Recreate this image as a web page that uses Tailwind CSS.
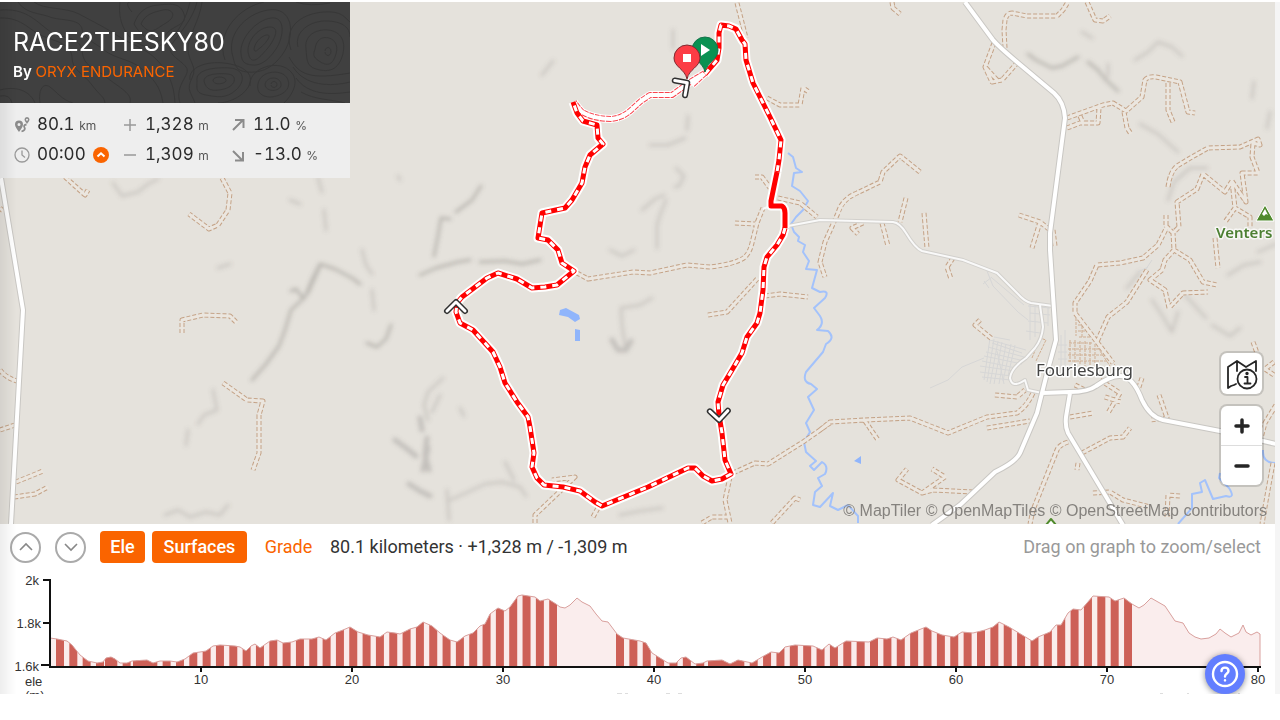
<!DOCTYPE html>
<html lang="en">
  <head>
    <meta charset="UTF-8" />
    <meta name="viewport" content="width=device-width, initial-scale=1.0" />
    <title>RACE2THESKY80</title>
    <script src="https://cdn.jsdelivr.net/npm/@tailwindcss/browser@4"></script>
  </head>

  <body class="bg-white pt-0.5 font-['Inter',sans-serif] text-[#333]">
    <main class="relative h-[692px] overflow-hidden border-r-5 border-[#f5f5f5]">
      <!-- Map -->
      <section class="relative h-[522px] overflow-hidden bg-[#e5e2dc]" aria-label="Route map">
        <svg class="absolute inset-0 h-full w-full" viewBox="0 2 1275 522" preserveAspectRatio="xMidYMid slice" fill="none" stroke-linejoin="round">
          <defs>
            <filter id="soft" x="-10%" y="-10%" width="120%" height="120%"><feGaussianBlur stdDeviation="2.2" /></filter>
            <path id="tracks" d="M892 2L893 8 900 14M1005 48L1004 30 1005 20Q1007 13 1012 13L1027 16H1057L1063 10 1068 2M1087 2L1095 20 1103 21 1110 16
              M994 43L985 67 992 82 1002 80 1017 63M986 68L997 80M1067 118L1103 105 1113 103 1126 111 1142 97 1145 80Q1148 76 1156 77L1180 82 1188 112 1195 113M1168 83V110L1173 122
              M1067 128L1080 123H1098L1099 108M1080 116L1083 123M1124 112L1127 128 1131 134M1168 187Q1170 172 1177 166L1192 157 1208 148 1240 147 1258 139 1260 145 1253 143 1252 157 1258 173 1242 173 1246 202 1232 181 1235 208 1250 217V227M1235 208L1225 222
              M1232 181L1225 192 1203 174 1197 189 1177 202 1179 227 1173 233 1174 250 1165 260 1162 270 1150 280 1165 290 1169 308 1183 293 1208 292M1174 250L1190 260 1203 282 1217 285M1173 233L1167 227 1158 245 1143 258 1120 263 1097 265 1090 281 1075 303V313L1097 342 1113 363M1166 215V227
              M1215 238L1217 258 1218 268M920 172L900 156 883 172 880 182 857 193Q842 199 838 213L825 242 820 262 825 277M906 198L900 222M924 213L927 248M882 223L888 246M863 223L852 228 858 234M1019 215L1040 222 1050 230M1040 222L1032 248M1053 230L1055 246
              M1147 270L1127 302 1108 317 1097 342M820 430L830 422 865 420 910 418 948 433 987 417 1017 413Q1027 406 1033 393M865 421L878 440M987 428L1030 421M995 395L1017 397 1025 390M973 492L933 490 922 493 898 480 907 469M922 493L945 477 932 469
              M1068 442Q1059 445 1057 450L1033 510 1030 524M1070 417L1093 413M1082 453L1110 438 1123 437 1130 428M1093 493L1110 492 1123 500 1150 507M1167 517L1168 495 1180 496M1078 463L1077 470M1100 380L1120 393 1108 413M1105 397L1121 402M1142 378L1138 390M1159 395L1167 418 1150 420
              M1253 342L1257 353M1276 405L1265 423 1260 442M1273 463L1268 490 1262 524M1274 362L1265 369 1274 375M980 320L975 325 992 339M953 258L947 267 951 279M1075 385L1085 390
              M65 177L85 195 88 190M222 178L230 193 228 210 218 225 209 229 189 214M182 333V320L203 315 230 316 237 323M223 383L247 400 263 401 259 415V453L253 470M0 370Q6 378 17 381M0 430L15 425M16 482L43 471M14 497L35 494 48 487
              M577 273L588 279 633 272 650 273 687 265 710 267Q736 264 745 257 750 252 752 243L757 223 763 208M735 223L755 224M708 315L727 312 758 278M765 296L780 294 808 297M778 198L800 203 817 217M755 177L762 177 770 188M767 98L780 105 800 105 803 88 809 92M737 3L746 38
              M733 473L755 463 768 464 803 442 830 423M535 523V515L575 477 552 480M730 477L725 500 730 523M702 523L712 517 728 517M772 523L795 498 800 500M593 517L598 508M0 208L4 212" />
            <path id="hollow" d="M705 73L690 82 683 87 672 95 650 95 641 101 630 111Q622 118 611 119 594 119 582 112 578 108 574 102M705 73L692 85" />
            <path id="striped" d="M705 74L717 60 719 48 719 33 721 25 729 26 736 29 742 40 745 44 746 60 753 83 770 117 781 140 779 160 777 172M785 228L783 235 777 245 767 257 764 267 763 290 760 313 757 323 747 337 742 353 732 370 723 385 718 402 719 415 722 433 725 460 731 474 722 479 712 481 703 476 695 468 688 468 648 487 602 506 595 502 580 491 563 487 544 485 537 478 532 467 534 453 530 427 528 417 517 402 505 383 500 367 493 352 473 330 460 323 456 312 457 303 462 297 487 278 498 273 517 279 532 288 545 287 557 285 574 271 562 263 558 250 548 240 538 238 542 213 565 208 572 200 582 183 585 167 590 155 603 144 598 138 597 125 583 121 577 113 573 102" />
            <path id="paved" d="M777 172L771 201V206H782Q785 208 785 213V228" />
            <path id="chevron" d="M-9 5L0 -4 9 5" />
            <path id="highways" d="M965 2L993 40Q998 46 1017 62L1054 93Q1064 102 1065 118L1050 233V250L1056 340 1047 373 1037 413 1020 453Q1016 462 995 472L960 505 932 525M1042 393L1070 392Q1088 392 1096 386 1120 369 1131 381 1137 387 1142 400 1150 417 1163 420L1220 431 1276 444M1070 393L1066 417Q1065 427 1068 433L1123 525M1 178L23 310 11 524" />
          </defs>

          <!-- Hill shading -->
          <g filter="url(#soft)" stroke="#77746f" stroke-linecap="round" stroke-linejoin="round">
            <path stroke-width="3" opacity=".38" d="M252 380L266 364 279 346 285 330 291 310 305 297 312 280 320 264 335 269 352 278 360 284M320 266L308 293M303 298L296 289 291 291M420 275L436 268 458 262 470 260M480 262L505 261 522 264 540 260M367 343L377 347 386 339 391 325 M434 256L438 236 441 218 450 219M456 212L472 200 481 186M1028 54L1036 60 1052 68 1062 66 1078 57M1088 62L1098 70 1106 80 1118 91" />
            <path stroke-width="5" opacity=".3" d="M427 438L425 455 429 470M395 440L406 448 416 456M428 448L423 470M409 484L420 491 430 496M612 340L618 350 626 350 631 341M420 418L422 430" />
            <path stroke-width="3" opacity=".22" d="M443 378L428 392 424 405 428 420M440 395L432 412M460 408L464 416M450 500L468 492 485 484 502 482 520 487 526 496M447 490L448 505 449 520M505 462L514 480M620 515L640 511 662 508M676 168L684 176 679 186 675 187M642 210L655 199 664 195 M657 248L657 225 660 215 666 200M673 30V48M650 145L668 145 685 138M688 116L687 130M542 75L553 61M165 515L178 510 190 517 206 512 220 515 228 505M113 183L122 196 138 192 148 184 158 179M218 268L230 264M186 445L188 430M198 424L204 415 217 410 213 390M1135 60L1148 52 1158 42 1172 47 1182 56M1108 64L1108 76M1082 32L1092 38M1140 124L1158 134 1178 152M1168 200L1174 182 1190 168 1207 168M1270 112L1267 128M1127 288L1140 272M1152 300L1162 315 1172 332 1178 312M1185 295L1206 318M1212 325L1230 336 1240 328M1228 275L1244 265 1260 262M1258 252L1276 244M1252 98L1254 82M398 176L400 180M290 200L300 204M625 345L622 325 621 308 640 305 652 298M318 178L322 192M324 210L326 230M362 250L366 265 372 274M372 290L374 310M610 250L622 256 634 250" />
          </g>

          <!-- Water -->
          <g stroke="#a3c2fb" stroke-width="2">
            <path d="M788 153L793 157 796 168 802 172 794 173 792 186 800 191 808 201 803 210 796 217 791 224 794 232 799 237 798 241 805 245 803 252 809 261 806 269 817 270 812 288 820 292Q830 290 825 298L814 308 820 316Q825 324 817 330L828 331Q836 338 826 344L823 352 806 372Q802 382 811 384L817 389 808 397 814 410 806 423 810 432 804 442 806 452 816 461 810 466 814 470 822 462Q829 466 825 474L818 478 822 486 815 492 813 505 820 507 833 493 830 506 838 510 848 505 858 516 858 523" />
            <path d="M1263 450Q1262 463 1276 463M1220 473L1219 478 1229 488Q1236 499 1226 496L1213 499 1205 480 1200 483 1202 492 1192 494 1192 508 1178 524" />
          </g>
          <path fill="#90b5fb" d="M560 310L566 308 579 315 580 319 575 322 568 317 559 315zM575 329L580 330V341L575 341zM854 461L861 456V464z" />

          <!-- Residential streets -->
          <g stroke="#d6d6d6" stroke-width="1">
            <path d="M987 271L993 286 1018 312 1028 320M992 278L1024 305M998 274L1028 302M1028 306L1050 308M1030 313L1050 315M1028 321L1048 323M1026 331L1040 333M1030 302V340M1035 304V337M1048 307V326M990 340L1026 350M988 347L1024 357M984 356L1022 364M980 366L1014 371M982 377L1011 380M990 338L984 380M998 341L990 384M1006 344L999 384M1015 345L1008 376M1061 335V378M1065 330V375M1058 345H1067M1058 352H1067M1058 359H1067M930 388L948 380 962 367 984 358M983 284L992 277M984 281L989 288M1137 290L1142 275 1152 260M1138 272L1148 267M994 337L1010 340M997 351L1004 384M992 343L1022 353M986 352L1020 360M982 361L1016 368M980 372L1012 376M994 339L987 382M1002 342L994 384M1011 344L1003 381" />
          </g>
          <g stroke="#cfae92" stroke-width="1" stroke-dasharray="3 1">
            <path d="M1070 340V362M1075 340V364M1080 341V365M1085 341V366M1090 342V366M1095 344V367M1069 343H1092M1068 349H1098M1068 355H1105M1068 361H1108M1076 316L1095 338M1078 325H1085M1078 331H1090M1079 337H1094M1098 348L1110 366M1102 348L1115 365M1032 358L1040 338 1046 340 1036 361M1076 318V336M1082 322V338" />
          </g>

          <use href="#tracks" stroke="#c4a286" stroke-width="5" stroke-dasharray="4 2" />
          <use href="#tracks" stroke="#ebe6df" stroke-width="3" />

          <!-- Roads -->
          <path stroke="#d2d0cc" stroke-width="4" d="M788 226L820 220 893 222Q900 223 906 233 915 248 922 251L963 260 997 273 1018 294Q1024 301 1031 303L1053 306M1040 305L1043 327Q1042 339 1035 348L1026 358Q1011 368 1010 378 1012 389 1025 380L1028 390 1042 393" />
          <path stroke="#f9f9f9" stroke-width="2" d="M763 209L772 205M788 226L820 220 893 222Q900 223 906 233 915 248 922 251L963 260 997 273 1018 294Q1024 301 1031 303L1053 306M1040 305L1043 327Q1042 339 1035 348L1026 358Q1011 368 1010 378 1012 389 1025 380L1028 390 1042 393" />
          <use href="#highways" stroke="#c9c7c3" stroke-width="6" />
          <use href="#highways" stroke="#fff" stroke-width="4" />

          <!-- Places -->
          <g stroke="#fff" stroke-width="3" paint-order="stroke" class="font-['Noto_Sans',sans-serif]">
            <text x="1036" y="376" fill="#444" class="text-[17px]">Fouriesburg</text>
            <text x="1216" y="238" fill="#4d8033" stroke-opacity=".7" class="text-[15px] font-semibold">Venters</text>
          </g>
          <path fill="#4f8a2c" stroke="#fff" stroke-width="1" d="M1265 205L1274 221H1256z" />
          <path fill="#fff" d="M1265 209L1268 215 1266 214 1264 216 1262 214z" />
          <path fill="#fff" stroke="#4f8a2c" stroke-width="2" d="M1046 525L1051 519 1056 525" />

          <!-- Route -->
          <use href="#hollow" stroke="#fff" stroke-width="8" />
          <use href="#striped" stroke="#fff" stroke-width="9" />
          <use href="#paved" stroke="#fff" stroke-width="9" />
          <use href="#hollow" stroke="#f8444e" stroke-width="6" stroke-dasharray="5 1" />
          <use href="#hollow" stroke="#fff" stroke-width="4" />
          <use href="#striped" stroke="#f00" stroke-width="5" />
          <use href="#striped" stroke="#fff" stroke-width="3" stroke-dasharray="6 6" />
          <use href="#paved" stroke="#f00" stroke-width="5" />

          <!-- Direction arrows -->
          <g stroke-linecap="round">
            <g stroke="#303030" stroke-width="6">
              <use href="#chevron" transform="translate(456 306)" />
              <use href="#chevron" transform="translate(719 416) rotate(178)" />
              <use href="#chevron" transform="translate(684 85) rotate(55)" />
            </g>
            <g stroke="#fff" stroke-width="3">
              <use href="#chevron" transform="translate(456 306)" />
              <use href="#chevron" transform="translate(719 416) rotate(178)" />
              <use href="#chevron" transform="translate(684 85) rotate(55)" />
            </g>
          </g>

          <!-- Start and finish pins -->
          <path fill="#0a9152" stroke="#14734a" d="M705 72C703 62 692 60 692 50A13 13 0 0 1 718 50C718 60 707 62 705 72z" />
          <path fill="#fff" d="M701 44L710 50 701 56z" />
          <path fill="#fc3c45" stroke="#7d2a30" d="M687 79C685 69 674 67 674 58A13 13 0 0 1 700 58C700 67 689 69 687 79z" />
          <path fill="#fff" d="M683 54H691V62H683z" />
        </svg>

        <!-- Route summary -->
        <div class="relative w-[350px]">
          <header class="relative h-[101px] overflow-hidden bg-[#404040] px-[13px] pt-6">
            <svg class="absolute inset-0 h-full w-full" viewBox="0 0 350 101" fill="none" stroke="#373737" stroke-width="1" aria-hidden="true">
              <path d="M0 8C25 6 35 18 48 28S80 33 82 49 92 64 106 75 133 92 130 101M0 16C23 15 30 30 45 35S72 44 72 56 84 72 92 83 104 94 105 101M0 88C19 83 31 91 35 101M12 101Q10 92 0 94M40 101C38 88 43 80 50 85S62 98 73 101M18 0C26 12 40 11 50 15S80 16 82 27 93 39 104 48 131 57 142 67 160 83 163 101M34 0C44 8 66 5 79 12S108 27 118 34 145 46 156 57 174 80 175 101M132 10C125 2 128 0 130 0M134 22C138 10 146 4 158 3S180 0 184 12 171 23 165 34 143 38 134 22zM141 22C145 12 154 10 163 8S178 14 166 21 151 34 141 22zM120 0C118 14 122 31 136 40S160 45 169 38 186 17 190 0M197 0C193 17 179 32 172 42S180 57 186 65 174 82 180 101M202 0C200 18 188 34 188 47S198 64 192 76 191 90 195 101" />
              <path d="M248 50C247 38 259 25 270 25S274 39 267 47 251 66 248 50zM254 47C255 39 264 32 268 33S264 43 260 46 255 51 254 47zM241 52C239 37 256 18 271 16S284 35 276 47 260 64 252 63 242 60 241 52zM233 55C226 34 244 12 268 8S296 31 284 50 257 71 247 70 235 65 233 55M225 58C215 30 240 5 264 0M315 47C316 38 322 34 329 36S339 45 335 55 325 63 319 59 313 53 315 47zM306 47C304 34 315 27 328 28S347 40 342 55 326 70 316 67 307 57 306 47zM298 45C294 30 310 18 328 19S350 28 350 35M291 48C282 22 306 11 324 10S344 15 350 20M325 49a3 4 0 1 1 0 1M204 79C204 72 218 71 228 72S236 84 224 87 206 88 204 79zM213 78C214 74 225 74 226 78S213 84 213 78zM197 79C195 67 216 65 230 66S246 79 236 88 217 95 206 93 197 86 197 79zM190 78C188 65 207 59 224 61S253 70 250 81 231 101 218 101M271 82a3 3 0 1 1 0 1M265 82C267 74 280 74 281 82S265 91 265 82zM258 82C260 68 284 66 288 78S277 95 270 95 256 91 258 82zM250 84C248 67 276 57 289 68S291 94 284 101M289 55C299 73 310 78 350 71M293 65C305 84 330 85 350 80M296 76C308 93 330 93 350 90M301 90C315 98 330 97 345 101M296 0Q310 5 330 1" />
            </svg>
            <h1 class="relative text-[25px] leading-8 text-white">RACE2THESKY80</h1>
            <p class="relative pt-1 text-[15px] leading-5 font-semibold text-white">By <a href="#" class="font-normal text-[#fa6400]">ORYX ENDURANCE</a></p>
          </header>
          <ul class="grid h-[75px] auto-rows-[30px] grid-cols-[108px_108px_1fr] bg-[#eee] px-[14px] pt-[7px] text-[17px] text-[#2b2b2b] tabular-nums">
            <li class="flex items-center gap-[7px]">
              <svg class="size-4" role="img" aria-label="Distance" viewBox="0 0 16 16" fill="none" stroke="#8b8b8b">
                <path fill="#8b8b8b" fill-rule="evenodd" stroke="none" d="M5 3.5A4 4 0 0 1 9 7.5C9 10 7 12 5 15 3 12 1 10 1 7.500A4 4 0 0 1 5 3.500zM5 6a1.500 1.500 0 1 0 0 3 1.500 1.500 0 0 0 0-3zM13 0A2.600 2.600 0 0 1 15.500 2.600C15.500 4 14 5.500 13 7 12 5.500 10.500 4 10.500 2.600A2.600 2.600 0 0 1 13 0zM13 1.800a1 1 0 1 0 0 2 1 1 0 0 0 0-2z" />
                <path stroke-width="1.8" d="M12.500 7.500Q9 8 10.500 10.500T7.500 14.500" />
              </svg>
              <p>80.1 <span class="text-[12px] text-[#555]">km</span></p>
            </li>
            <li class="flex items-center gap-[7px]">
              <svg class="size-4" role="img" aria-label="Ascent" viewBox="0 0 16 16" stroke="#999" stroke-width="1.5"><path d="M2 8H14M8 2V14" /></svg>
              <p>1,328 <span class="text-[12px] text-[#555]">m</span></p>
            </li>
            <li class="flex items-center gap-[7px]">
              <svg class="size-4" role="img" aria-label="Steepest climb" viewBox="0 0 16 16" fill="none" stroke="#8b8b8b" stroke-width="2"><path d="M3 13L13 3M5 3H13.500V11" /></svg>
              <p>11.0 <span class="text-[12px] text-[#555]">%</span></p>
            </li>
            <li class="flex items-center gap-[7px]">
              <svg class="size-4" role="img" aria-label="Estimated time" viewBox="0 0 16 16" fill="none" stroke="#999" stroke-width="1.3"><circle cx="8" cy="8" r="7" /><path d="M8 3.500V8L11 10.500" /></svg>
              <p>00:00</p>
              <button type="button" aria-label="Time estimate" class="size-4 rounded-full bg-[#fa6400]">
                <svg viewBox="0 0 16 16" fill="none" stroke="#fff" stroke-width="2"><path d="M4.500 9.500L8 6.300 11.500 9.500" /></svg>
              </button>
            </li>
            <li class="flex items-center gap-[7px]">
              <svg class="size-4" role="img" aria-label="Descent" viewBox="0 0 16 16" stroke="#999" stroke-width="1.5"><path d="M2 8H14" /></svg>
              <p>1,309 <span class="text-[12px] text-[#555]">m</span></p>
            </li>
            <li class="flex items-center gap-[7px]">
              <svg class="size-4" role="img" aria-label="Steepest descent" viewBox="0 0 16 16" fill="none" stroke="#8b8b8b" stroke-width="2"><path d="M3 4L12 13M5 13.500H13V5" /></svg>
              <p>-13.0 <span class="text-[12px] text-[#555]">%</span></p>
            </li>
          </ul>
        </div>

        <!-- Map controls -->
        <div class="absolute top-[351px] right-[13px] flex flex-col gap-3">
          <button type="button" aria-label="Map style" class="flex size-[41px] items-center justify-center rounded-md bg-white shadow-[0_0_0_2px_rgba(0,0,0,0.14)]">
            <svg class="size-8" viewBox="0 0 32 32" fill="none" stroke="#252525" stroke-width="1.8" stroke-linejoin="round" stroke-linecap="round">
              <path d="M8 27L5 28 2 30V9L11 3 20 9 30 3V13M11 3V13M8 27L10 26" />
              <circle cx="21" cy="21" r="9.500" />
              <path d="M19 19H21.500V25.500M18.500 25.500H24.500" /><circle cx="21" cy="15.500" r=".8" fill="#252525" />
            </svg>
          </button>
          <div class="flex flex-col divide-y divide-[#ddd] rounded-md bg-white shadow-[0_0_0_2px_rgba(0,0,0,0.14)]">
            <button type="button" aria-label="Zoom in" class="flex h-10 items-center justify-center">
              <svg class="size-4" viewBox="0 0 16 16" stroke="#252525" stroke-width="3.500" stroke-linecap="round"><path d="M2 8H14M8 2V14" /></svg>
            </button>
            <button type="button" aria-label="Zoom out" class="flex h-[39px] items-center justify-center">
              <svg class="size-4" viewBox="0 0 16 16" stroke="#252525" stroke-width="3.500" stroke-linecap="round"><path d="M2 8H14" /></svg>
            </button>
          </div>
        </div>
        <p class="absolute right-2 bottom-[3px] font-['Liberation_Sans',sans-serif] text-[16px] leading-5 text-[#85827e]">© MapTiler © OpenMapTiles © OpenStreetMap contributors</p>
      </section>

      <!-- Graph toolbar -->
      <div class="flex items-center bg-white pt-[7px] pr-[14px] pl-2.5 font-['Roboto',sans-serif] text-[18px] leading-8">
        <button type="button" aria-label="Collapse graph" class="mr-3.5 flex size-[31px] items-center justify-center rounded-full border-2 border-[#aaa]">
          <svg class="size-4" viewBox="0 0 16 16" fill="none" stroke="#888" stroke-width="1.6"><path d="M2 11L8 5 14 11" /></svg>
        </button>
        <button type="button" aria-label="Expand graph" class="mr-3.5 flex size-[31px] items-center justify-center rounded-full border-2 border-[#aaa]">
          <svg class="size-4" viewBox="0 0 16 16" fill="none" stroke="#888" stroke-width="1.6"><path d="M2 5L8 11 14 5" /></svg>
        </button>
        <button type="button" class="mr-[7px] w-[45px] rounded-sm bg-[#fa6400] font-medium text-white">Ele</button>
        <button type="button" class="w-[95px] rounded-sm bg-[#fa6400] font-medium text-white">Surfaces</button>
        <button type="button" class="w-[83px] text-[#fa6400]">Grade</button>
        <p>80.1 kilometers · +1,328 m / -1,309 m</p>
        <p class="ml-auto text-[#999]">Drag on graph to zoom/select</p>
      </div>

      <!-- Elevation profile -->
      <svg class="block w-full bg-white" viewBox="0 563 1275 131" fill="none" role="img" aria-label="Elevation profile">
        <defs>
          <path id="profile" d="M50 638L57 639 67 641 72 645 80 655 88 661 97 663 103 662 106 658 111 657 115 659 120 663 127 663 132 661 147 660 153 663 160 661 170 661 177 662 185 659 193 653 200 652 206 651 213 646 220 645 235 646 240 647 246 651 251 646 255 644 260 648 270 641 277 640 283 643 292 642 300 639 312 639 319 637 326 640 335 633 343 630 350 627 358 632 368 635 380 637 387 632 395 633 400 634 410 629 417 627 423 622 432 626 440 633 450 640 457 642 465 636 473 633 480 626 485 624 490 614 498 608 505 611 510 607 518 596 522 595 535 597 540 601 548 599 556 604 560 607 565 608 570 605 577 598 582 602 590 606 596 614 602 621 608 622 617 634 623 638 640 641 646 643 652 653 660 658 668 663 676 663 681 658 686 657 695 664 703 663 707 661 722 660 730 664 738 660 752 663 762 657 771 652 779 653 785 647 795 645 813 646 822 650 829 644 835 648 846 641 869 642 877 638 887 639 893 637 901 640 911 633 926 627 932 631 942 635 954 637 962 632 973 633 985 630 993 627 999 622 1009 627 1032 641 1038 637 1050 632 1056 625 1061 625 1068 613 1073 609 1081 610 1093 596 1109 597 1115 601 1124 598 1132 604 1139 608 1144 605 1151 598 1158 602 1165 606 1175 621 1183 623 1189 633 1195 637 1201 639 1209 638 1216 634 1220 629 1225 633 1231 637 1239 633 1243 625 1246 632 1251 635 1257 632 1260 634V667H50Z" />
          <clipPath id="under"><use href="#profile" /></clipPath>
        </defs>
        <g clip-path="url(#under)">
          <path fill="#faeded" d="M50 580H1260V667H50z" />
          <path stroke="#cd6057" stroke-width="100" stroke-dasharray="8 5.330" d="M56 617H557" />
          <path stroke="#cd6057" stroke-width="100" stroke-dasharray="8 5.370" d="M616 617H1132" />
          <path stroke="#cd6057" stroke-width="100" d="M105 617H115M133 617H151M708 617H724M726 617H743" />
        </g>
        <use href="#profile" stroke="#d9a09d" stroke-width="1" />
        <path stroke="#111" stroke-width="2" d="M43 580H50V667H1261M43 623H50M41 665H50M201 667V672M352 667V672M503 667V672M654 667V672M805 667V672M956 667V672M1107 667V672M1258 667V672" />
        <g fill="#333" class="font-['Liberation_Sans',sans-serif] text-[13px]">
          <g text-anchor="end">
            <text x="39" y="585">2k</text>
            <text x="41" y="628">1.8k</text>
            <text x="39" y="671">1.6k</text>
          </g>
          <text x="25" y="686">ele</text>
          <text x="25" y="700">(m)</text>
          <g text-anchor="middle">
            <text x="201" y="684">10</text>
            <text x="352" y="684">20</text>
            <text x="503" y="684">30</text>
            <text x="654" y="684">40</text>
            <text x="805" y="684">50</text>
            <text x="956" y="684">60</text>
            <text x="1107" y="684">70</text>
            <text x="1258" y="684">80</text>
          </g>
        </g>
        <path stroke="#bbb" d="M617 694H622M625 694H628M666 694H670M678 694H682M1160 694H1163M1187 694H1189M1238 694H1240" />
      </svg>

      <!-- Left edge shade -->
      <div class="pointer-events-none absolute inset-y-0 left-0 w-4 bg-linear-to-r from-black/7 to-transparent"></div>

      <button type="button" aria-label="Help" class="absolute right-[30px] bottom-0 flex size-10 items-center justify-center rounded-full bg-[#627eff] shadow-[0_1px_6px_rgba(0,0,0,0.45)]">
        <svg class="size-7" viewBox="0 0 28 28" fill="none" stroke="#fff" stroke-width="2.4" stroke-linecap="round">
          <circle cx="14" cy="14" r="12" />
          <path d="M10.500 11C10.500 6.500 17.500 6.500 17.500 11 17.500 13.500 14 13.500 14 16.500" /><path d="M14 20.300V20.400" />
        </svg>
      </button>
    </main>
  </body>
</html>
